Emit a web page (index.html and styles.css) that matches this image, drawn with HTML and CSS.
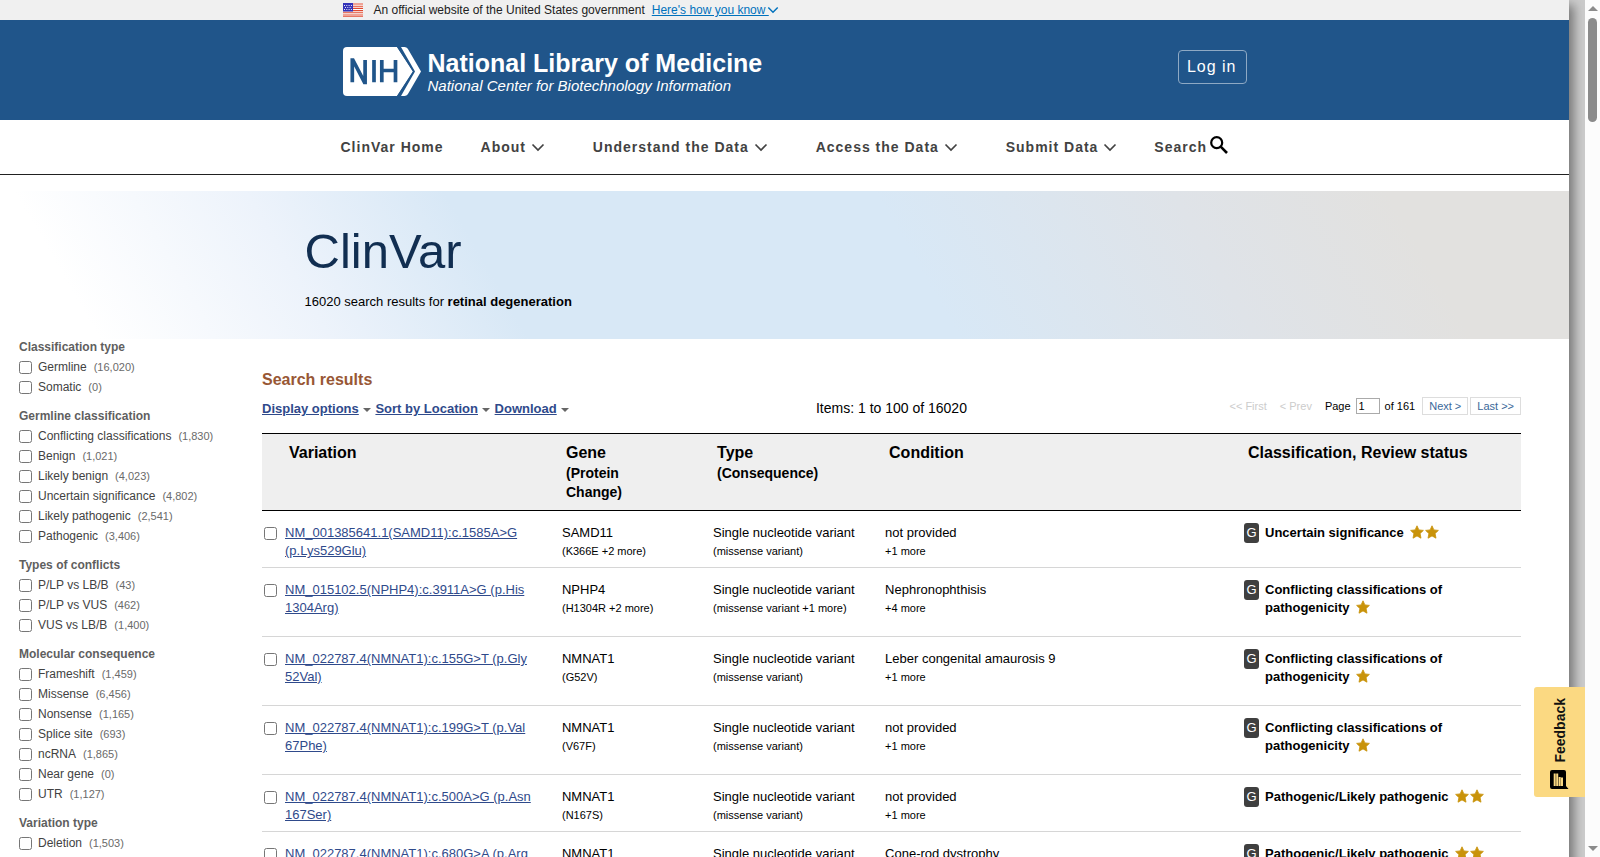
FILE: index.html
```html
<!DOCTYPE html>
<html lang="en">

<head>
	<meta charset="UTF-8">
	<meta name="viewport" content="width=device-width, initial-scale=1.0">
	<title>retinal degeneration - ClinVar - NCBI</title>
	<link rel="stylesheet" href="styles.css">
</head>

<body>
	<!-- Shared icons -->
	<svg class="icon-defs" aria-hidden="true">
		<symbol id="chevron" viewBox="0 0 14 9">
			<path d="M1.5 1.5 7 7l5.500-5.500" fill="none" stroke="currentColor" stroke-width="1.700" />
		</symbol>
		<symbol id="star" viewBox="0 0 14 14">
			<path d="M7 .8l1.900 4.100 4.500.5-3.300 3.100.9 4.700L7 10.900l-4 2.300.9-4.700L.6 5.400l4.500-.5z" fill="#c9930a" stroke="#c9930a" stroke-width=".8" stroke-linejoin="round" />
		</symbol>
	</svg>

	<div class="viewport">
		<div class="page">
			<div class="gov-banner">
				<div class="wrap">
					<svg class="flag" viewBox="0 0 20 14">
						<rect width="20" height="14" fill="#fff" />
						<path d="M0 1h20M0 3.200h20M0 5.400h20M0 7.600h20M0 9.800h20M0 12h20M0 13.800h20" stroke="#e0492f" stroke-width="1.100" />
						<rect width="10" height="8.500" fill="#3333b8" />
						<path d="M1 2.500h8M2 4.500h7M1 6.500h8" stroke="#fff" stroke-width=".9" stroke-dasharray="1 1.300" />
					</svg>
					<span>An official website of the United States government</span>
					<a href="#" class="gov-link">Here's how you know <svg><use href="#chevron" /></svg></a>
				</div>
			</div>

			<header class="nlm-header">
				<div class="wrap">
					<a href="#" class="logo">
						<svg viewBox="0 0 78 49">
							<path d="M4 0h50l16 24.500L54 49H4a4 4 0 0 1-4-4V4a4 4 0 0 1 4-4z" fill="#fff" />
							<path d="M55.500-1 72 24.500 55.500 50" fill="none" stroke="#20558a" stroke-width="3.500" />
							<path d="M58 0h3.500a4 4 0 0 1 3.300 1.800L78 24.500 64.800 47.200a4 4 0 0 1-3.300 1.800H58l14-24.500z" fill="#fff" />
							<path d="M9.300 35.300V13h.6l11.600 22.300h.6V13M31 13v22.300M38.800 13v22.300M38.800 23.500h13.700M52.500 13v22.300" fill="none" stroke="#20558a" stroke-width="3.700" />
						</svg>
						<span class="logo-text">
							<span class="logo-name">National Library of Medicine</span>
							<span class="logo-sub">National Center for Biotechnology Information</span>
						</span>
					</a>
					<a href="#" class="login">Log in</a>
				</div>
			</header>

			<nav class="main-nav">
				<div class="wrap">
					<a href="#">ClinVar Home</a>
					<a href="#" class="has-menu">About <svg><use href="#chevron" /></svg></a>
					<a href="#" class="has-menu">Understand the Data <svg><use href="#chevron" /></svg></a>
					<a href="#" class="has-menu">Access the Data <svg><use href="#chevron" /></svg></a>
					<a href="#">Submit Data <svg><use href="#chevron" /></svg></a>
					<a href="#" class="search-link">Search
						<svg class="search-icon" viewBox="0 0 18 18">
							<circle cx="6.700" cy="6.700" r="5.500" fill="none" stroke="#000" stroke-width="2.200" />
							<path d="M10.700 10.700 17 17" stroke="#000" stroke-width="2.600" />
						</svg>
					</a>
				</div>
			</nav>

			<section class="hero">
				<div class="hero-wrap">
					<h1>ClinVar</h1>
					<p>16020 search results for <b>retinal degeneration</b></p>
				</div>
			</section>

			<div class="content">
				<aside class="filters">
					<section>
						<h2>Classification type</h2>
						<label><input type="checkbox">Germline <small>(16,020)</small></label>
						<label><input type="checkbox">Somatic <small>(0)</small></label>
					</section>
					<section>
						<h2>Germline classification</h2>
						<label><input type="checkbox">Conflicting classifications <small>(1,830)</small></label>
						<label><input type="checkbox">Benign <small>(1,021)</small></label>
						<label><input type="checkbox">Likely benign <small>(4,023)</small></label>
						<label><input type="checkbox">Uncertain significance <small>(4,802)</small></label>
						<label><input type="checkbox">Likely pathogenic <small>(2,541)</small></label>
						<label><input type="checkbox">Pathogenic <small>(3,406)</small></label>
					</section>
					<section>
						<h2>Types of conflicts</h2>
						<label><input type="checkbox">P/LP vs LB/B <small>(43)</small></label>
						<label><input type="checkbox">P/LP vs VUS <small>(462)</small></label>
						<label><input type="checkbox">VUS vs LB/B <small>(1,400)</small></label>
					</section>
					<section>
						<h2>Molecular consequence</h2>
						<label><input type="checkbox">Frameshift <small>(1,459)</small></label>
						<label><input type="checkbox">Missense <small>(6,456)</small></label>
						<label><input type="checkbox">Nonsense <small>(1,165)</small></label>
						<label><input type="checkbox">Splice site <small>(693)</small></label>
						<label><input type="checkbox">ncRNA <small>(1,865)</small></label>
						<label><input type="checkbox">Near gene <small>(0)</small></label>
						<label><input type="checkbox">UTR <small>(1,127)</small></label>
					</section>
					<section>
						<h2>Variation type</h2>
						<label><input type="checkbox">Deletion <small>(1,503)</small></label>
						<label><input type="checkbox">Duplication <small>(610)</small></label>
					</section>
				</aside>

				<main class="results">
					<h2>Search results</h2>
					<div class="toolbar">
						<div class="options">
							<a href="#">Display options</a>
							<a href="#">Sort by Location</a>
							<a href="#">Download</a>
						</div>
						<div class="item-count">Items: 1 to 100 of 16020</div>
						<div class="pager">
							<span class="off">&lt;&lt; First</span>
							<span class="off">&lt; Prev</span>
							<label for="pageno">Page</label>
							<input type="text" id="pageno" value="1">
							<span class="total">of 161</span>
							<a href="#">Next &gt;</a>
							<a href="#">Last &gt;&gt;</a>
						</div>
					</div>

					<table class="variants">
						<thead>
							<tr>
								<th class="col-check"></th>
								<th class="col-variation">Variation</th>
								<th class="col-gene">Gene<small>(Protein<br>Change)</small></th>
								<th class="col-type">Type<small>(Consequence)</small></th>
								<th class="col-condition">Condition</th>
								<th class="col-class">Classification, Review status</th>
							</tr>
						</thead>
						<tbody>
							<tr>
								<td><input type="checkbox" aria-label="Select variant 1"></td>
								<td class="name"><a href="#">NM_001385641.1(SAMD11):c.1585A&gt;G<br>(p.Lys529Glu)</a></td>
								<td>SAMD11<small>(K366E +2 more)</small></td>
								<td>Single nucleotide variant<small>(missense variant)</small></td>
								<td>not provided<small>+1 more</small></td>
								<td><div class="classif"><span class="badge">G</span><b>Uncertain significance <svg><use href="#star" /></svg><svg><use href="#star" /></svg></b></div></td>
							</tr>
							<tr class="tall">
								<td><input type="checkbox" aria-label="Select variant 2"></td>
								<td class="name"><a href="#">NM_015102.5(NPHP4):c.3911A&gt;G (p.His<wbr>1304Arg)</a></td>
								<td>NPHP4<small>(H1304R +2 more)</small></td>
								<td>Single nucleotide variant<small>(missense variant +1 more)</small></td>
								<td>Nephronophthisis<small>+4 more</small></td>
								<td><div class="classif"><span class="badge">G</span><b>Conflicting classifications of pathogenicity <svg><use href="#star" /></svg></b></div></td>
							</tr>
							<tr class="tall">
								<td><input type="checkbox" aria-label="Select variant 3"></td>
								<td class="name"><a href="#">NM_022787.4(NMNAT1):c.155G&gt;T (p.Gly<wbr>52Val)</a></td>
								<td>NMNAT1<small>(G52V)</small></td>
								<td>Single nucleotide variant<small>(missense variant)</small></td>
								<td>Leber congenital amaurosis 9<small>+1 more</small></td>
								<td><div class="classif"><span class="badge">G</span><b>Conflicting classifications of pathogenicity <svg><use href="#star" /></svg></b></div></td>
							</tr>
							<tr class="tall">
								<td><input type="checkbox" aria-label="Select variant 4"></td>
								<td class="name"><a href="#">NM_022787.4(NMNAT1):c.199G&gt;T (p.Val<wbr>67Phe)</a></td>
								<td>NMNAT1<small>(V67F)</small></td>
								<td>Single nucleotide variant<small>(missense variant)</small></td>
								<td>not provided<small>+1 more</small></td>
								<td><div class="classif"><span class="badge">G</span><b>Conflicting classifications of pathogenicity <svg><use href="#star" /></svg></b></div></td>
							</tr>
							<tr>
								<td><input type="checkbox" aria-label="Select variant 5"></td>
								<td class="name"><a href="#">NM_022787.4(NMNAT1):c.500A&gt;G (p.Asn<wbr>167Ser)</a></td>
								<td>NMNAT1<small>(N167S)</small></td>
								<td>Single nucleotide variant<small>(missense variant)</small></td>
								<td>not provided<small>+1 more</small></td>
								<td><div class="classif"><span class="badge">G</span><b>Pathogenic/Likely pathogenic <svg><use href="#star" /></svg><svg><use href="#star" /></svg></b></div></td>
							</tr>
							<tr>
								<td><input type="checkbox" aria-label="Select variant 6"></td>
								<td class="name"><a href="#">NM_022787.4(NMNAT1):c.680G&gt;A (p.Arg<wbr>227Gln)</a></td>
								<td>NMNAT1<small>(R227Q)</small></td>
								<td>Single nucleotide variant<small>(missense variant)</small></td>
								<td>Cone-rod dystrophy<small>+1 more</small></td>
								<td><div class="classif"><span class="badge">G</span><b>Pathogenic/Likely pathogenic <svg><use href="#star" /></svg><svg><use href="#star" /></svg></b></div></td>
							</tr>
						</tbody>
					</table>
				</main>
			</div>
		</div>

		<button type="button" class="feedback">
			<svg viewBox="0 0 19 19">
				<path d="M2 0h12a2 2 0 0 1 2 2v14l2.500 3H2a2 2 0 0 1-2-2V2a2 2 0 0 1 2-2z" fill="#000" />
				<path d="M4.700 3.500V16M7.200 3.500V16M9.700 7v9M12 7.500V16" stroke="#fbd982" stroke-width="2" />
			</svg>
			<span>Feedback</span>
		</button>
	</div>

	<div class="scrollbar" aria-hidden="true">
		<span class="arrow-up"></span>
		<span class="thumb"></span>
		<span class="arrow-down"></span>
	</div>
</body>

</html>
```
FILE: styles.css
```css
body {
	margin: 0;
	height: 100vh;
	display: flex;
	overflow: hidden;
	background: #ccc;
	color: #000;
	font-family: "Liberation Sans", Arial, Helvetica, sans-serif;
	font-size: 13px;
}

.icon-defs {
	position: absolute;
	width: 0;
	height: 0;
}

.viewport {
	flex: 1;
	min-width: 0;
	position: relative;
	overflow: hidden;
	padding-right: 16px;
}

.page {
	min-height: 100%;
	background: #fff;
	box-shadow: 5px 5px 10px #777;
}

.wrap {
	max-width: 904px;
	margin: 0 auto;
	padding-left: 20px;
	display: flex;
	align-items: center;
}

/* Government banner */
.gov-banner {
	background: #f0f0f0;
	font-size: 12px;
	line-height: 20px;
	color: #212121;
}

.flag {
	width: 20px;
	height: 14px;
	margin-right: 11px;
}

.gov-link {
	margin-left: 7px;
	color: #0071bc;
}

.gov-link svg {
	width: 12px;
	height: 8px;
	margin-left: -2px;
}

/* Header */
.nlm-header {
	background: #20558a;
}

.nlm-header .wrap {
	height: 100px;
	justify-content: space-between;
}

.logo {
	display: flex;
	align-items: center;
	color: #fff;
	text-decoration: none;
	padding-top: 3px;
}

.logo svg {
	width: 78px;
	height: 49px;
	margin-right: 7px;
}

.logo-name,
.logo-sub {
	display: block;
}

.logo-name {
	font-size: 25px;
	font-weight: bold;
	line-height: 28px;
}

.logo-sub {
	font-size: 15px;
	font-style: italic;
	line-height: 18px;
}

.login {
	color: #fff;
	text-decoration: none;
	font-size: 16px;
	letter-spacing: 1px;
	line-height: 32px;
	padding: 0 9px 0 8px;
	margin-bottom: 7px;
	border: 1px solid #8ea9c4;
	border-radius: 4px;
}

/* Navigation */
.main-nav {
	border-bottom: 1px solid #212121;
	margin-bottom: 16px;
}

.main-nav .wrap {
	height: 54px;
	gap: 37px;
	max-width: 906px;
	padding-left: 18px;
}

.main-nav a {
	color: #424242;
	font-size: 14px;
	font-weight: bold;
	letter-spacing: 1px;
	text-decoration: none;
	white-space: nowrap;
}

.main-nav svg {
	width: 14px;
	height: 9px;
}

.main-nav .has-menu {
	margin-right: 11px;
}

.main-nav .search-link {
	display: flex;
	align-items: center;
	gap: 3px;
}

.main-nav .search-icon {
	width: 18px;
	height: 18px;
	margin-bottom: 5px;
}

/* Title band */
.hero {
	background: linear-gradient(60deg, #fff 6%, #edf3fb 20%, #d8e8f6 32%, #d8e8f6 58%, #dfe3e8 76%, #e2e1df 89%);
}

.hero-wrap {
	max-width: 960px;
	height: 148px;
	margin: 0 auto;
	box-sizing: border-box;
	padding-top: 32px;
}

.hero h1 {
	margin: 0 0 14px;
	color: #112e51;
	font-size: 49px;
	font-weight: normal;
	line-height: 56px;
}

.hero p {
	margin: 0;
	line-height: 18px;
}

/* Filters */
.content {
	display: flex;
}

.filters {
	width: 262px;
	flex-shrink: 0;
	box-sizing: border-box;
	padding: 1px 0 0 19px;
	color: #424242;
	font-size: 12px;
}

.filters section {
	margin-bottom: 12px;
}

.filters h2 {
	margin: 0 0 3px;
	font-size: 12px;
	line-height: 14px;
	color: #5f5f5f;
}

.filters label {
	display: flex;
	align-items: center;
	height: 20px;
	white-space: nowrap;
}

.filters input {
	margin: 0 6px 0 0;
}

.filters small {
	margin-left: 7px;
	font-size: 11px;
	color: #6a6a6a;
}

/* Results */
.results {
	flex: 1;
	min-width: 0;
	margin-right: 48px;
}

.results h2 {
	margin: 31px 0 6px;
	color: #985735;
	font-size: 16px;
	line-height: 20px;
}

.toolbar {
	display: grid;
	grid-template-columns: 44% 1fr auto;
	height: 37px;
}

.options a {
	color: #2f4a8b;
	font-weight: bold;
	line-height: 26px;
	margin-right: 13px;
	position: relative;
}

.options a::after {
	content: "";
	position: absolute;
	left: 100%;
	top: 7px;
	margin-left: 4px;
	border: 4px solid transparent;
	border-top-color: #666;
	border-bottom: 0;
}

.item-count {
	font-size: 14px;
	line-height: 24px;
}

.pager {
	display: flex;
	align-items: center;
	height: 18px;
	margin-top: 1px;
	font-size: 11px;
}

.pager .off {
	color: #ccc;
	margin-right: 13px;
}

.pager input {
	width: 24px;
	height: 16px;
	box-sizing: border-box;
	margin: 0 5px;
	padding: 0 2px;
	border: 1px solid #aaa;
	font: inherit;
}

.pager .total {
	margin-right: 5px;
}

.pager a {
	color: #3a6899;
	text-decoration: none;
	line-height: 16px;
	padding: 0 6px;
	margin-left: 2px;
	border: 1px solid #ddd;
}

.variants {
	width: 100%;
	table-layout: fixed;
	border-collapse: collapse;
	line-height: 18px;
}

.variants thead {
	background: #efefef;
	border-top: 1px solid #000;
	border-bottom: 1px solid #000;
}

.variants th {
	box-sizing: border-box;
	padding: 10px 0 8px 4px;
	font-size: 16px;
	text-align: left;
	vertical-align: top;
}

.variants th small {
	display: block;
	font-size: 14px;
	line-height: 19px;
	padding-top: 2px;
}

.col-check {
	width: 23px;
}

.col-variation {
	width: 22%;
}

.col-gene {
	width: 12%;
}

.col-type {
	width: 172px;
}

.col-class {
	width: 22%;
}

.variants td {
	padding: 13px 0 7px;
	vertical-align: top;
}

.variants tbody tr {
	border-bottom: 1px solid #d6d6d6;
}

.variants .tall td {
	padding-bottom: 19px;
}

.variants .name {
	padding-right: 28px;
}

.variants td input {
	display: block;
	margin: 3px 2px;
}

.variants td a {
	color: #2f4a8b;
}

.variants td small {
	display: block;
	font-size: 11px;
}

.classif {
	display: flex;
	align-items: flex-start;
}

.badge {
	flex-shrink: 0;
	width: 15px;
	margin: -1px 6px 0 0;
	background: #3f3f3f;
	border-radius: 3px;
	color: #fff;
	line-height: 20px;
	text-align: center;
}

.classif b {
	max-width: 220px;
}

.classif svg {
	width: 14px;
	height: 14px;
	margin-left: 1px;
	vertical-align: -2px;
}

.classif svg:first-of-type {
	margin-left: 3px;
}

/* Feedback tab */
.feedback {
	position: absolute;
	right: 0;
	bottom: 60px;
	width: 51px;
	height: 110px;
	padding: 0 0 8px;
	display: flex;
	flex-direction: column-reverse;
	align-items: center;
	gap: 7px;
	border: 0;
	border-radius: 3px 0 0 3px;
	background: #fbd982;
	color: #111;
	font-family: inherit;
	font-size: 14px;
	font-weight: bold;
}

.feedback svg {
	width: 19px;
	height: 19px;
}

.feedback span {
	writing-mode: vertical-rl;
	transform: rotate(180deg);
}

/* Scrollbar */
.scrollbar {
	width: 15px;
	display: flex;
	flex-direction: column;
	align-items: center;
	box-sizing: border-box;
	padding: 6px 0;
	background: #fcfcfc;
}

.arrow-up,
.arrow-down {
	border: 5px solid transparent;
}

.arrow-up {
	border-top: 0;
	border-bottom-color: #8b8b8b;
}

.arrow-down {
	border-bottom: 0;
	border-top-color: #8b8b8b;
	margin-top: auto;
}

.thumb {
	width: 9px;
	height: 104px;
	margin-top: 7px;
	border-radius: 5px;
	background: #8b8b8b;
}
```
